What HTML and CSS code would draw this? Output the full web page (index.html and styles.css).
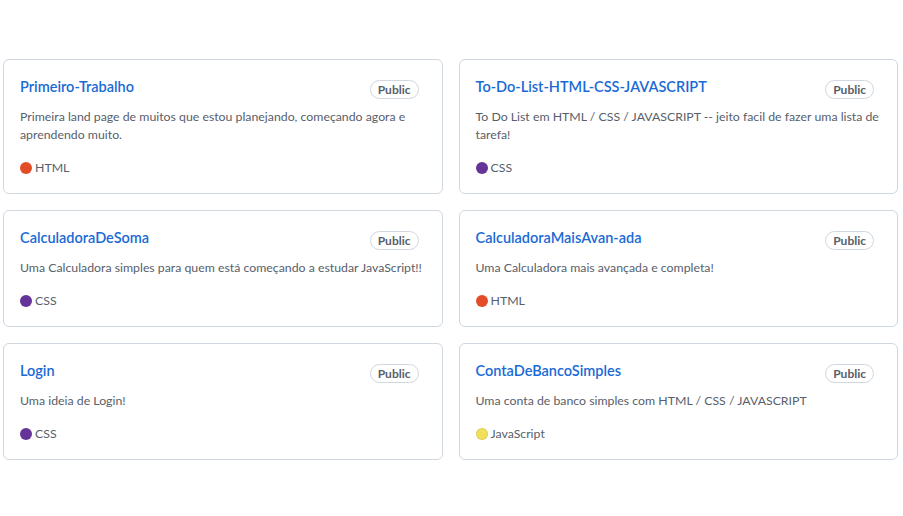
FILE: index.html
```html
<!DOCTYPE html>
<html lang="pt-BR">
<head>
<meta charset="utf-8">
<title>Pinned repositories</title>
<link rel="stylesheet" href="styles.css">
</head>
<body>
<main class="page">
  <ol class="pinned-list">
    <li class="pinned-item">
      <div class="pinned-title">
        <a class="repo" href="#">Primeiro-Trabalho</a>
        <span class="label">Public</span>
      </div>
      <p class="desc">Primeira land page de muitos que estou planejando, começando agora e aprendendo muito.</p>
      <p class="meta"><span class="lang-dot lang-html"></span>HTML</p>
    </li>
    <li class="pinned-item">
      <div class="pinned-title">
        <a class="repo" href="#">To-Do-List-HTML-CSS-JAVASCRIPT</a>
        <span class="label">Public</span>
      </div>
      <p class="desc">To Do List em HTML / CSS / JAVASCRIPT -- jeito facil de fazer uma lista de tarefa!</p>
      <p class="meta"><span class="lang-dot lang-css"></span>CSS</p>
    </li>
    <li class="pinned-item">
      <div class="pinned-title">
        <a class="repo" href="#">CalculadoraDeSoma</a>
        <span class="label">Public</span>
      </div>
      <p class="desc">Uma Calculadora simples para quem está começando a estudar JavaScript!!</p>
      <p class="meta"><span class="lang-dot lang-css"></span>CSS</p>
    </li>
    <li class="pinned-item">
      <div class="pinned-title">
        <a class="repo" href="#">CalculadoraMaisAvan-ada</a>
        <span class="label">Public</span>
      </div>
      <p class="desc">Uma Calculadora mais avançada e completa!</p>
      <p class="meta"><span class="lang-dot lang-html"></span>HTML</p>
    </li>
    <li class="pinned-item">
      <div class="pinned-title">
        <a class="repo" href="#">Login</a>
        <span class="label">Public</span>
      </div>
      <p class="desc">Uma ideia de Login!</p>
      <p class="meta"><span class="lang-dot lang-css"></span>CSS</p>
    </li>
    <li class="pinned-item">
      <div class="pinned-title">
        <a class="repo" href="#">ContaDeBancoSimples</a>
        <span class="label">Public</span>
      </div>
      <p class="desc">Uma conta de banco simples com HTML / CSS / JAVASCRIPT</p>
      <p class="meta"><span class="lang-dot lang-js"></span>JavaScript</p>
    </li>
  </ol>
</main>
</body>
</html>
```
FILE: styles.css
```css
* { box-sizing: border-box; }
html, body { margin: 0; padding: 0; background: #ffffff; }
body {
  font-family: "Segoe UI", Lato, "Liberation Sans", Arial, sans-serif;
  color: #24292f;
}
.page {
  padding: 59px 5px 0 3px;
}
.pinned-list {
  list-style: none;
  margin: 0;
  padding: 0;
  display: grid;
  grid-template-columns: 1fr 1fr;
  column-gap: 16px;
  row-gap: 16px;
}
.pinned-item {
  border: 1px solid #d0d7de;
  border-radius: 6px;
  padding: 16px;
  display: flex;
  flex-direction: column;
}
.pinned-title {
  display: flex;
  align-items: flex-start;
  justify-content: space-between;
  height: 24px;
}
.repo {
  font-size: 14.5px;
  font-weight: 600;
  line-height: 21px;
  color: #1a6ad6;
  text-decoration: none;
}
.label {
  display: inline-block;
  margin: 4px 7px 0 4px;
  padding: 0 7px;
  font-size: 12px;
  font-weight: 700;
  line-height: 17px;
  color: #57606a;
  border: 1px solid #d0d7de;
  border-radius: 2em;
}
.desc {
  margin: 8px 0 0;
  font-size: 12.3px;
  line-height: 18px;
  color: #57606a;
  flex: 1 0 auto;
}
.meta {
  margin: 15px 0 0;
  font-size: 12.3px;
  line-height: 18px;
  color: #57606a;
  display: flex;
  align-items: center;
}
.lang-dot {
  width: 12px;
  height: 12px;
  border-radius: 50%;
  margin-right: 3px;
  display: inline-block;
}
.lang-html { background: #e34c26; }
.lang-css { background: #663399; }
.lang-js { background: #f1e05a; border: 1px solid rgba(0,0,0,0.08); }
```
